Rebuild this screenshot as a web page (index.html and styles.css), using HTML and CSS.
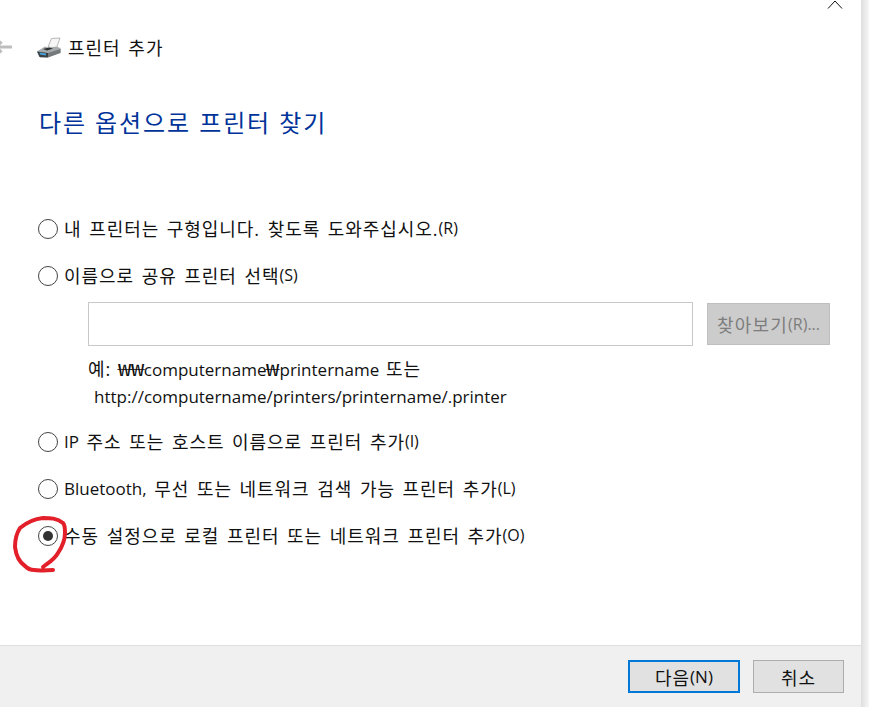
FILE: index.html
```html
<!DOCTYPE html>
<html>
<head>
  <meta charset="UTF-8">
  <title>프린터 추가</title>
  <link rel="stylesheet" href="styles.css">
</head>
<body>
<div class="window">
  <svg class="close" width="16" height="10" viewBox="0 0 16 10"><path d="M1 8.500L8 1L15 8.500" fill="none" stroke="#111" stroke-width="1"/></svg>
  <div class="content">
    <div class="titlebar">
      <svg class="back" width="12" height="16" viewBox="0 0 12 16"><path d="M0 8H12M1.500 2.500L-3.500 8L1.500 13.500" fill="none" stroke="#bdbdbd" stroke-width="3"/></svg>
      <svg class="printer" width="25" height="21" viewBox="0 0 25 21">
        <path d="M12 10L15.500 1.500L24 1L20.500 11Z" fill="#f6f6f6" stroke="#a4a4a4" stroke-width=".8"/>
        <path d="M1 14.500L9 9.500L13 11L20 9.500L24.500 11V15.500L11 20.500H4Z" fill="#a6aaac"/>
        <path d="M1 14.500L12 16V20.500L3.500 20Z" fill="#3a4043"/>
        <path d="M12 16L24.500 12V16L12 20.500Z" fill="#74797c"/>
        <path d="M3.500 15.500L10 16.500V18.500L4 17.500Z" fill="#4aa3d8"/>
        <path d="M7 12L13 10.500L17 11.500L11 13.500Z" fill="#2b3033"/>
      </svg>
      <span class="titlebar-text">프린터 추가</span>
    </div>
    <h1 class="heading">다른 옵션으로 프린터 찾기</h1>
    <div class="options">
      <label class="option"><span class="radio"></span>내 프린터는 구형입니다. 찾도록 도와주십시오.<span class="key">(R)</span></label>
      <label class="option"><span class="radio"></span>이름으로 공유 프린터 선택<span class="key">(S)</span></label>
      <div class="share">
        <div class="share-row">
          <div class="share-input"></div>
          <div class="browse">찾아보기<span class="key">(R)...</span></div>
        </div>
        <p class="hint">예: <span class="won">₩</span><span class="won">₩</span><span class="latin">computername</span><span class="won">₩</span><span class="latin">printername</span> 또는</p>
        <p class="hint hint-url"><span class="latin">http://computername/printers/printername/.printer</span></p>
      </div>
      <label class="option"><span class="radio"></span><span class="latin">IP</span>&nbsp;주소 또는 호스트 이름으로 프린터 추가<span class="key">(I)</span></label>
      <label class="option"><span class="radio"></span><span class="latin">Bluetooth,</span>&nbsp;무선 또는 네트워크 검색 가능 프린터 추가<span class="key">(L)</span></label>
      <label class="option"><span class="radio on"></span>수동 설정으로 로컬 프린터 또는 네트워크 프린터 추가<span class="key">(O)</span></label>
    </div>
  </div>
  <div class="footer">
    <div class="btn btn-default">다음<span class="key">(N)</span></div>
    <div class="btn">취소</div>
  </div>
</div>
<svg class="scribble" width="70" height="60" viewBox="0 0 70 60"><path d="M63 7C57 2 50 2 43 2C34 3 26 7 20 12C16 18 15 25 15 31C16 39 19 46 25 50C28 53 31 54 34 54C40 55 47 54 53 54M43 51C48 47 54 44 58 37C62 31 65 24 65 17C65 12 65 9 63 7" fill="none" stroke="#e3202a" stroke-width="4" stroke-linecap="round" stroke-linejoin="round"/></svg>
</body>
</html>
```

FILE: styles.css
```css
* {
  margin: 0;
  padding: 0;
  box-sizing: border-box;
}
html, body {
  height: 100%;
  overflow: hidden;
}
body {
  position: relative;
  background: linear-gradient(to right, #dedede, #f7f7f7) no-repeat right / 8px 100%;
  font-family: "Open Sans", "Noto Sans CJK KR", sans-serif;
  font-size: 18px;
  color: #111;
}
.window {
  position: relative;
  width: 861px;
  height: 707px;
  background: #fff;
  display: flex;
  flex-direction: column;
}
.close {
  position: absolute;
  top: 0;
  left: 827px;
}
.content {
  flex: 1;
  padding: 0 0 0 38px;
}
.titlebar {
  display: flex;
  align-items: center;
  height: 24px;
  margin: 35px 0 0 -38px;
}
.back {
  overflow: visible;
  margin-right: 24px;
}
.printer {
  margin-right: 7px;
}
.titlebar-text {
  letter-spacing: 1px;
  word-spacing: 2px;
}
.heading {
  margin: 48px 0 0 1px;
  font-size: 24px;
  font-weight: 400;
  line-height: 32px;
  letter-spacing: 1.9px;
  color: #003399;
}
.options {
  margin-top: 77px;
}
.option {
  display: flex;
  align-items: center;
  height: 24px;
  margin-bottom: 23px;
  letter-spacing: 0.95px;
  word-spacing: 2px;
  white-space: pre;
}
.latin {
  font-size: 17px;
  letter-spacing: 0;
  word-spacing: 0;
}
.won {
  display: inline-block;
  width: 13px;
  font-size: 17px;
  letter-spacing: 0;
  text-align: center;
  transform: scaleX(1.45);
}
.radio {
  flex: none;
  width: 20px;
  height: 20px;
  margin: 2px 6px 0 0;
  border: 1px solid #444;
  border-radius: 50%;
  display: flex;
  align-items: center;
  justify-content: center;
}
.radio.on::after {
  content: "";
  width: 10px;
  height: 10px;
  border-radius: 50%;
  background: #333;
}
.key {
  font-size: 16px;
  letter-spacing: 0;
}
.share {
  margin: -8px 0 19px 50px;
}
.share-row {
  display: flex;
  gap: 14px;
  margin-bottom: 10px;
}
.share-input {
  width: 605px;
  height: 44px;
  border: 1px solid #c9c9c9;
  background: #fff;
}
.browse {
  width: 123px;
  height: 42px;
  margin-top: 1px;
  background: #cccccc;
  border: 1px solid #bfbfbf;
  color: #7d7d7d;
  display: flex;
  align-items: center;
  justify-content: center;
  letter-spacing: 1.2px;
}
.hint {
  line-height: 27px;
  letter-spacing: 0.95px;
  word-spacing: 1px;
}
.hint-url {
  margin-left: 6px;
}
.footer {
  height: 62px;
  flex: none;
  background: #f0f0f0;
  border-top: 1px solid #dfdfdf;
  display: flex;
  justify-content: flex-end;
  align-items: flex-start;
  gap: 13px;
  padding: 14px 17px 0 0;
}
.btn {
  width: 91px;
  height: 33px;
  background: #e1e1e1;
  border: 1px solid #adadad;
  display: flex;
  align-items: center;
  justify-content: center;
  letter-spacing: 0.95px;
}
.btn .key {
  font-size: 17px;
}
.btn-default {
  width: 112px;
  border: 2px solid #0078d7;
}
.scribble {
  position: absolute;
  left: 0;
  top: 516px;
}
```
